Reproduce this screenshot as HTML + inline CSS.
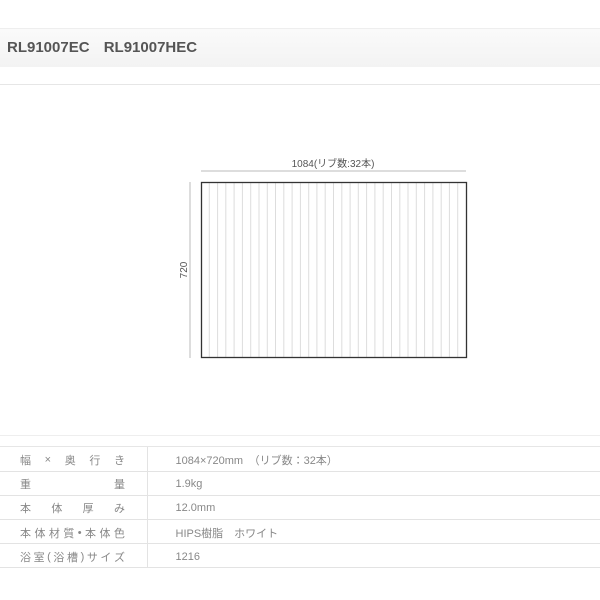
<!DOCTYPE html>
<html><head><meta charset="utf-8"><style>
body{margin:0;width:600px;height:600px;background:#fff;font-family:"Liberation Sans","Noto Sans CJK JP",sans-serif;position:relative;overflow:hidden}
.hdr{position:absolute;left:0;top:28px;width:600px;height:38px;background:linear-gradient(#fafafa,#f3f3f3);border-top:1px solid #eee}
.hdr span{position:absolute;left:7px;top:10px;font-size:15px;font-weight:bold;color:#555;word-spacing:10px}
.ln{position:absolute;left:0;width:600px;height:1px;background:#e6e6e6}
table{position:absolute;left:0;top:447px;width:600px;border-collapse:collapse;font-size:11px;color:#888}
td{height:23px;border-bottom:1px solid #e3e3e3;padding:2px 0 0 0;box-sizing:border-box;height:24.2px}
td.l{width:147px;border-right:1px solid #e3e3e3;padding-left:20px;letter-spacing:0}
td.r{padding-left:28px}
.j{display:flex;justify-content:space-between;width:105px;align-items:center}
</style></head><body>
<div class="hdr"><span>RL91007EC RL91007HEC</span></div>
<div class="ln" style="top:84px"></div>
<svg style="position:absolute;left:0;top:0" width="600" height="440">
<line x1="201" y1="171" x2="466" y2="171" stroke="#bbb" stroke-width="1"/>
<line x1="190" y1="182" x2="190" y2="358" stroke="#bbb" stroke-width="1"/>
<text x="333" y="167" font-size="10" fill="#555" text-anchor="middle" font-family="Liberation Sans,Noto Sans CJK JP,sans-serif">1084(リブ数:32本)</text>
<text transform="translate(187,270) rotate(-90)" font-size="10" fill="#555" text-anchor="middle" font-family="Liberation Sans,sans-serif">720</text>
<g stroke="#ddd" stroke-width="1">
<path d="M209.3 182V358M217.6 182V358M225.8 182V358M234.1 182V358M242.4 182V358M250.7 182V358M259 182V358M267.3 182V358M275.5 182V358M283.8 182V358M292.1 182V358M300.4 182V358M308.7 182V358M316.9 182V358M325.2 182V358M333.5 182V358M341.8 182V358M350.1 182V358M358.3 182V358M366.6 182V358M374.9 182V358M383.2 182V358M391.5 182V358M399.8 182V358M408 182V358M416.3 182V358M424.6 182V358M432.9 182V358M441.2 182V358M449.4 182V358M457.7 182V358"/>
</g>
<rect x="201.5" y="182.5" width="265" height="175" fill="none" stroke="#333" stroke-width="1.3"/>
</svg>
<div class="ln" style="top:435px;background:#eee"></div>
<div class="ln" style="top:446px"></div>
<table>
<tr><td class="l"><div class="j"><span>幅</span><span>×</span><span>奥</span><span>行</span><span>き</span></div></td><td class="r">1084×720mm　（リブ数：32本）</td></tr>
<tr><td class="l"><div class="j"><span>重</span><span>量</span></div></td><td class="r">1.9kg</td></tr>
<tr><td class="l"><div class="j"><span>本</span><span>体</span><span>厚</span><span>み</span></div></td><td class="r">12.0mm</td></tr>
<tr><td class="l"><div class="j"><span>本</span><span>体</span><span>材</span><span>質</span><span>•</span><span>本</span><span>体</span><span>色</span></div></td><td class="r">HIPS樹脂　ホワイト</td></tr>
<tr><td class="l"><div class="j"><span>浴</span><span>室</span><span>(</span><span>浴</span><span>槽</span><span>)</span><span>サ</span><span>イ</span><span>ズ</span></div></td><td class="r">1216</td></tr>
</table>
</body></html>
